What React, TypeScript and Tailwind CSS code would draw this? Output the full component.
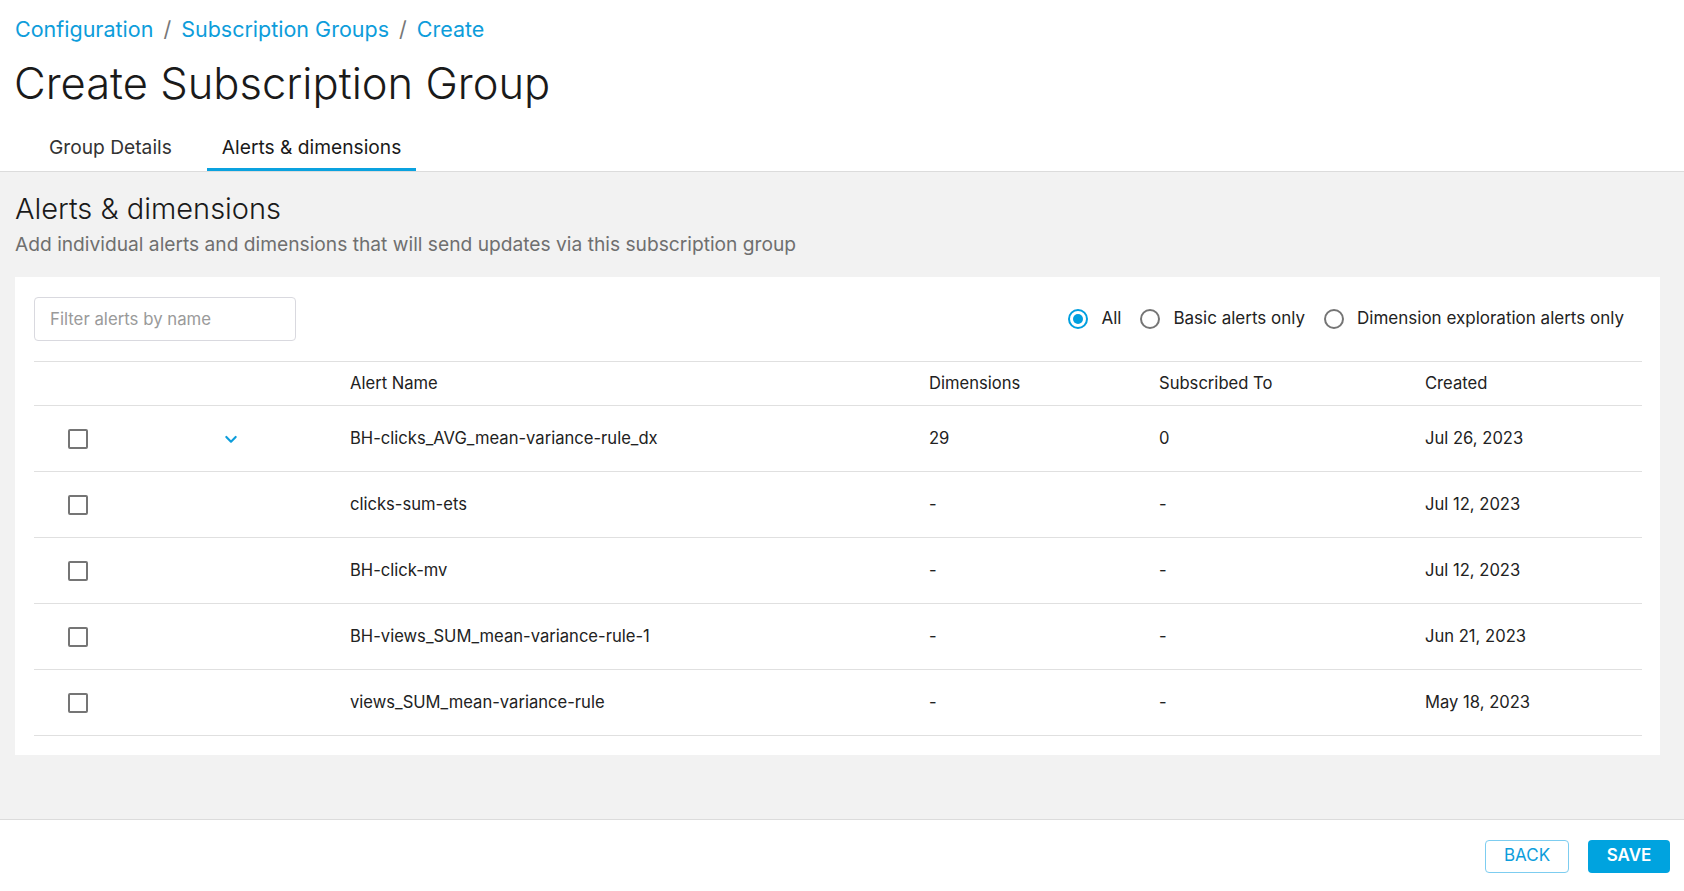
const alerts = [
  { name: "BH-clicks_AVG_mean-variance-rule_dx", dimensions: "29", subscribed: "0", created: "Jul 26, 2023", expandable: true },
  { name: "clicks-sum-ets", dimensions: "-", subscribed: "-", created: "Jul 12, 2023", expandable: false },
  { name: "BH-click-mv", dimensions: "-", subscribed: "-", created: "Jul 12, 2023", expandable: false },
  { name: "BH-views_SUM_mean-variance-rule-1", dimensions: "-", subscribed: "-", created: "Jun 21, 2023", expandable: false },
  { name: "views_SUM_mean-variance-rule", dimensions: "-", subscribed: "-", created: "May 18, 2023", expandable: false },
];

const cols = "grid grid-cols-[88px_228px_579px_230px_266px_1fr] items-center";

function Radio({ label, checked }: { label: string; checked?: boolean }) {
  return (
    <label className="flex items-center gap-[13px]">
      <span
        className={`flex h-[20px] w-[20px] items-center justify-center rounded-full border-2 ${
          checked ? "border-[#009fdf]" : "border-[#757575]"
        }`}
      >
        {checked && <span className="h-[10px] w-[10px] rounded-full bg-[#009fdf]" />}
      </span>
      <span className="text-[17px] text-[#222]">{label}</span>
    </label>
  );
}

function Checkbox() {
  return <span className="block h-[20px] w-[20px] rounded-[2px] border-2 border-[#757575]" />;
}

export default function App() {
  return (
    <div className="flex min-h-screen flex-col bg-white font-['Inter',sans-serif] text-[#222]">
      <header className="border-b border-[#dcdcdc] bg-white">
        <nav className="flex items-center gap-[10px] pl-[15px] pt-[15px] text-[21.5px] leading-[28px] text-[#0d9ddb]">
          <span>Configuration</span>
          <span className="text-[#777]">/</span>
          <span>Subscription Groups</span>
          <span className="text-[#777]">/</span>
          <span>Create</span>
        </nav>
        <h1 className="mt-[15px] pl-[14px] text-[43.5px] font-light leading-[50px] text-[#1a1a1a]">
          Create Subscription Group
        </h1>
        <div className="mt-[15px] flex gap-[20px] pl-[34px]">
          <button className="h-[48px] px-[15px] text-[19.2px] text-[#333]">Group Details</button>
          <button className="h-[48px] border-b-[3px] border-[#0aa2df] px-[15px] pt-[3px] text-[19.2px] text-[#1a1a1a]">
            Alerts &amp; dimensions
          </button>
        </div>
      </header>

      <main className="flex-1 bg-[#f2f2f2] pb-[64px] pl-[15px] pr-[24px] pt-[20px]">
        <h2 className="text-[29px] font-light leading-[34px] text-[#1a1a1a]">Alerts &amp; dimensions</h2>
        <p className="mt-[6px] text-[19.2px] leading-[24px] text-[#6f6f6f]">
          Add individual alerts and dimensions that will send updates via this subscription group
        </p>

        <section className="mt-[21px] bg-white pb-[19px] pl-[19px] pr-[18px] pt-[20px]">
          <div className="flex items-center justify-between">
            <input
              placeholder="Filter alerts by name"
              className="h-[44px] w-[262px] rounded-[4px] border border-[#d9d9df] px-[15px] text-[16.8px] placeholder:text-[#9a9a9a] outline-none"
            />
            <div className="mr-[18px] flex items-center gap-[19px]">
              <Radio label="All" checked />
              <Radio label="Basic alerts only" />
              <Radio label="Dimension exploration alerts only" />
            </div>
          </div>

          <div className="mt-[20px] border-t border-[#e0e0e0] text-[16.6px] text-[#222]">
            <div className={`${cols} h-[44px] border-b border-[#e0e0e0]`}>
              <div />
              <div />
              <div>Alert Name</div>
              <div>Dimensions</div>
              <div>Subscribed To</div>
              <div>Created</div>
            </div>
            {alerts.map((a) => (
              <div key={a.name} className={`${cols} h-[66px] border-b border-[#e0e0e0]`}>
                <div className="flex justify-center">
                  <Checkbox />
                </div>
                <div>
                  {a.expandable && (
                    <svg
                      className="ml-[101px]"
                      width="16"
                      height="16"
                      viewBox="0 0 24 24"
                      fill="none"
                      stroke="#0d9ddb"
                      strokeWidth="3.2"
                      strokeLinecap="round"
                      strokeLinejoin="round"
                    >
                      <path d="M5 9l7 7 7-7" />
                    </svg>
                  )}
                </div>
                <div>{a.name}</div>
                <div>{a.dimensions}</div>
                <div>{a.subscribed}</div>
                <div>{a.created}</div>
              </div>
            ))}
          </div>
        </section>
      </main>

      <footer className="flex h-[73px] items-center justify-end gap-[19px] border-t border-[#dcdcdc] bg-white pr-[14px]">
        <button className="h-[33px] w-[84px] rounded-[4px] border border-[#7dcdf0] text-[17px] text-[#0d9ddb]">BACK</button>
        <button className="h-[33px] w-[82px] rounded-[4px] bg-[#00a3df] text-[17px] font-semibold text-white">SAVE</button>
      </footer>
    </div>
  );
}
